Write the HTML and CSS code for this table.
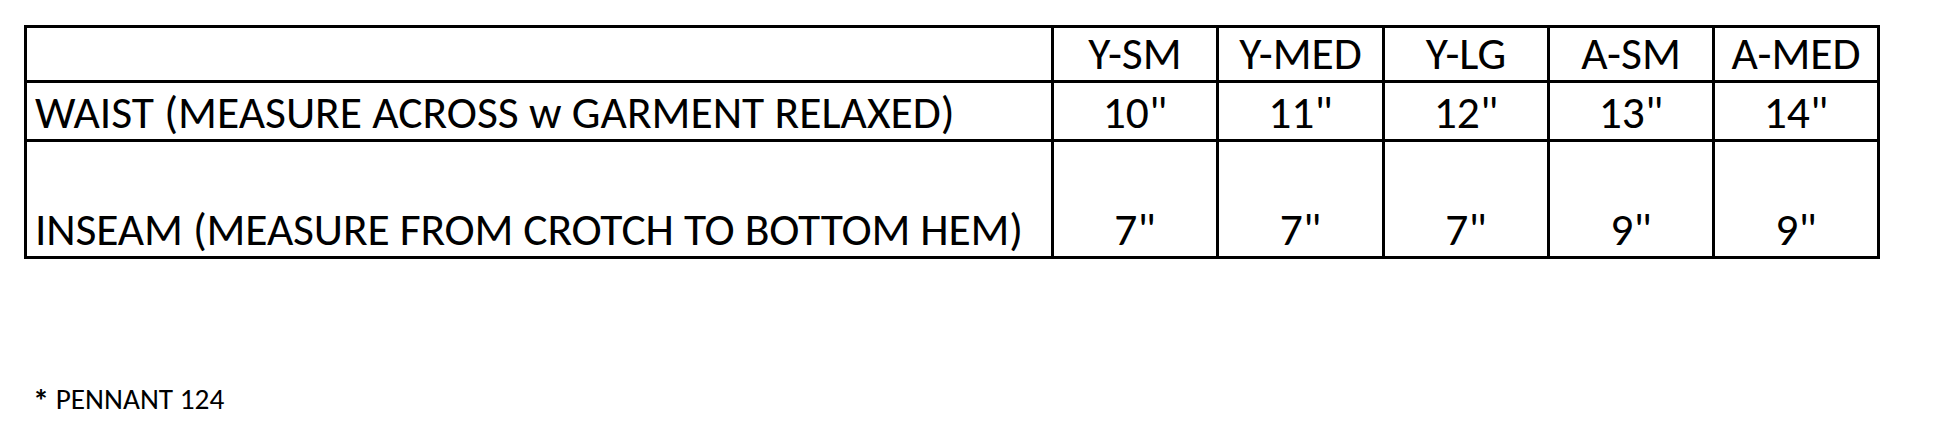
FILE: index.html
```html
<!DOCTYPE html>
<html lang="en">
<head>
<meta charset="utf-8">
<title>Size Chart</title>
<link rel="stylesheet" href="styles.css">
</head>
<body>
<main class="page">
  <div class="chart">
    <div class="cell label"></div>
    <div class="cell size">Y-SM</div>
    <div class="cell size">Y-MED</div>
    <div class="cell size">Y-LG</div>
    <div class="cell size">A-SM</div>
    <div class="cell size">A-MED</div>

    <div class="cell label">WAIST (MEASURE ACROSS w GARMENT RELAXED)</div>
    <div class="cell size">10"</div>
    <div class="cell size">11"</div>
    <div class="cell size">12"</div>
    <div class="cell size">13"</div>
    <div class="cell size">14"</div>

    <div class="cell label inseam">INSEAM (MEASURE FROM CROTCH TO BOTTOM HEM)</div>
    <div class="cell size">7"</div>
    <div class="cell size">7"</div>
    <div class="cell size">7"</div>
    <div class="cell size">9"</div>
    <div class="cell size">9"</div>
  </div>
  <p class="note"><span class="star">*</span> PENNANT 124</p>
</main>
</body>
</html>
```
FILE: styles.css
```css
html, body {
  margin: 0;
  padding: 0;
  background: #ffffff;
}

body {
  font-family: Carlito, "Liberation Sans Narrow", "Open Sans", sans-serif;
  color: #000000;
}

.page {
  padding: 25px 0 0 24px;
}

.chart {
  display: grid;
  grid-template-columns: 1027px 165px 166px 165px 165px 165px;
  grid-template-rows: 55px 59px 117px;
  width: max-content;
  border-left: 3px solid #000;
  border-top: 3px solid #000;
}

.cell {
  box-sizing: border-box;
  border-right: 3px solid #000;
  border-bottom: 3px solid #000;
  display: flex;
  align-items: flex-end;
  padding-bottom: 4px;
  font-size: 45.5px;
  line-height: 1;
  white-space: nowrap;
}

.label {
  padding-left: 8px;
}

.inseam {
  letter-spacing: -0.15px;
}

.size {
  justify-content: center;
}

.note {
  margin: 126px 0 0 9px;
  font-size: 29.3px;
  line-height: 1;
}

.star {
  font-weight: 700;
  font-size: 1.1em;
  line-height: 0;
  position: relative;
  top: 3px;
}
```
